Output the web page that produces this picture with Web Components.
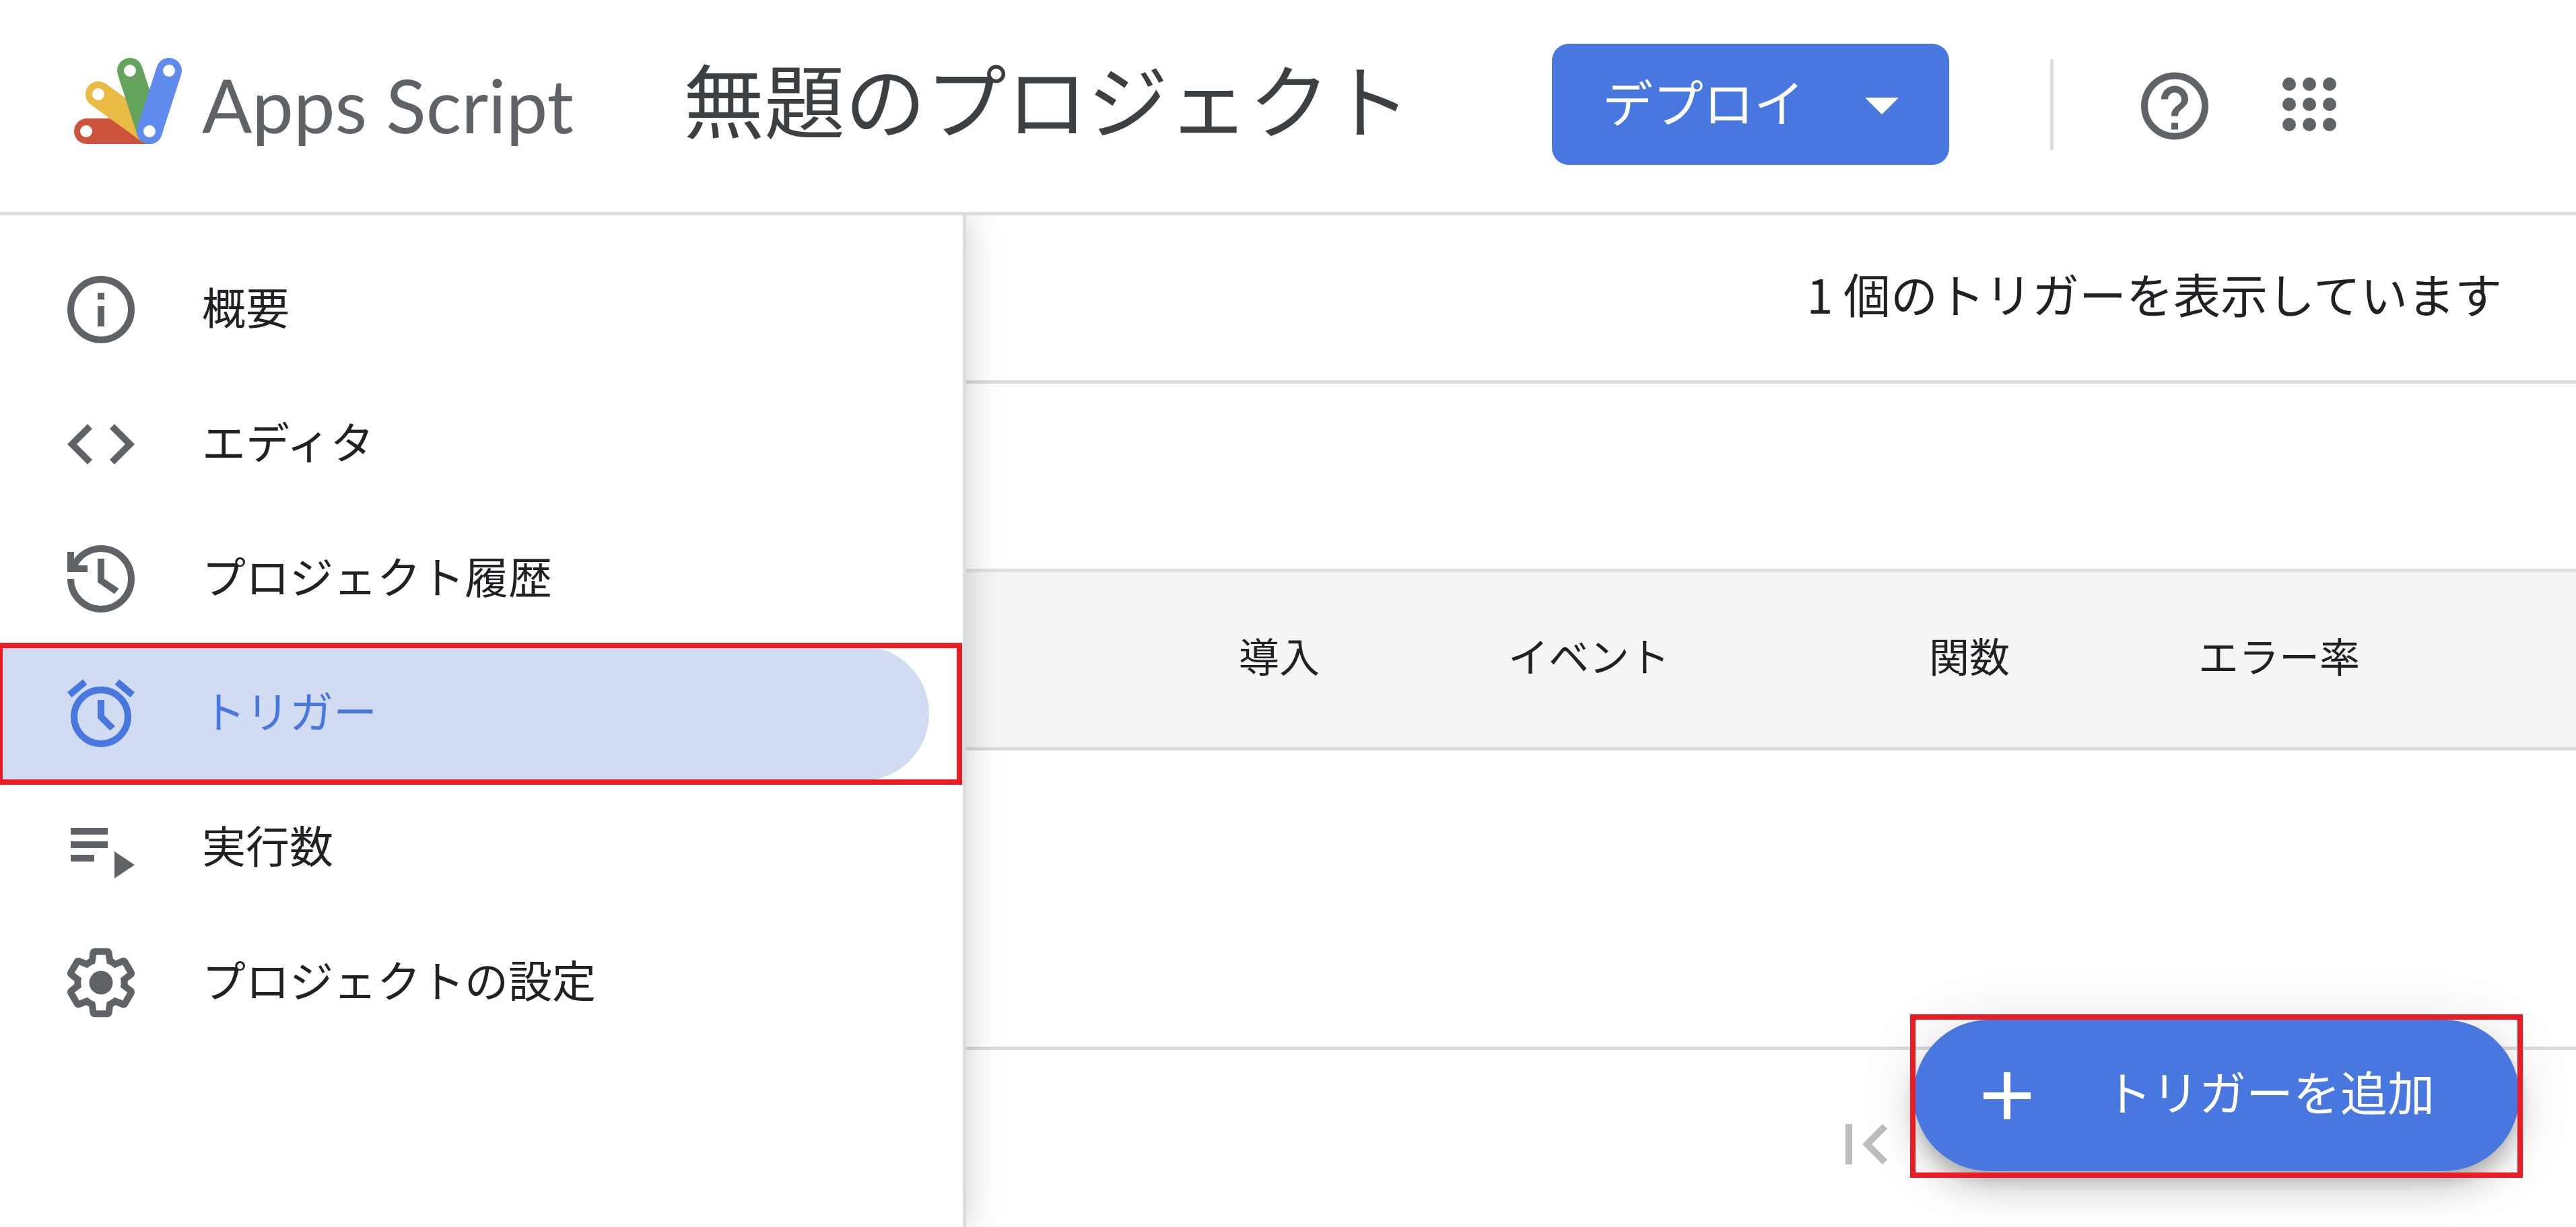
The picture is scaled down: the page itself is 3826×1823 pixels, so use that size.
<!DOCTYPE html>
<html lang="ja">
<head>
<meta charset="utf-8">
<title>無題のプロジェクト - Apps Script</title>
<style>
    body{
        margin: 0;
        background: white;
        color: #202124;
        font-family: "Noto Sans CJK JP", sans-serif;
    }
</style>
</head>
<body>
<script-app>
    <app-header slot="header" project="無題のプロジェクト"></app-header>
    <side-nav slot="nav">
        <nav-item icon="info" href="#overview">概要</nav-item>
        <nav-item icon="code" href="#editor">エディタ</nav-item>
        <nav-item icon="history" href="#history">プロジェクト履歴</nav-item>
        <mark-box class="nav-mark"><nav-item icon="alarm" href="#triggers" active>トリガー</nav-item></mark-box>
        <nav-item icon="executions" href="#executions">実行数</nav-item>
        <nav-item icon="settings" href="#settings">プロジェクトの設定</nav-item>
    </side-nav>
    <trigger-list>1 個のトリガーを表示しています</trigger-list>
    <mark-box slot="fab"><fab-button>トリガーを追加</fab-button></mark-box>
</script-app>

<script>
const ICONS = {
    info: `<path d="M11 7h2v2h-2zM11 11h2v6h-2z"/><circle cx="12" cy="12" r="9" fill="none" stroke="currentColor" stroke-width="2"/>`,
    code: `<path d="M9.4 16.6L4.8 12l4.6-4.6L8 6l-6 6 6 6zM14.6 16.6l4.6-4.6-4.6-4.6L16 6l6 6-6 6z"/>`,
    history: `<path d="M3 12a9 9 0 1 0 9-9C8.500 3 5.500 5 4 8M3 4v5h5" fill="none" stroke="currentColor" stroke-width="2"/><path d="M11 6v7l5 3.5 1.3-1.6L13 12V6z"/>`,
    alarm: `<path d="M22 5.72l-4.6-3.86-1.29 1.53 4.6 3.86zM7.88 3.39L6.6 1.86 2 5.71l1.29 1.53zM11 8v5.4l3.7 3.7 1.5-1.3-3.2-3.2V8z"/><circle cx="12" cy="13" r="8" fill="none" stroke="currentColor" stroke-width="2"/>`,
    executions: `<path d="M3 6h11v2H3zM3 10h11v2H3zM3 14h7v2H3zM16 13v8l6-4z"/>`,
    settings: `<path d="M13.85 22.25h-3.7c-.74 0-1.36-.54-1.45-1.27l-.27-1.89c-.27-.14-.53-.29-.79-.46l-1.8.72c-.7.26-1.47-.03-1.81-.65L2.2 15.53c-.35-.66-.2-1.44.36-1.88l1.53-1.19c-.01-.15-.02-.3-.02-.46 0-.15.01-.31.02-.46l-1.52-1.19c-.59-.45-.74-1.26-.37-1.88l1.85-3.19c.34-.62 1.11-.9 1.79-.63l1.81.73c.26-.17.52-.32.78-.46l.27-1.91c.09-.7.71-1.25 1.44-1.25h3.7c.74 0 1.36.54 1.45 1.27l.27 1.89c.27.14.53.29.79.46l1.8-.72c.71-.26 1.48.03 1.82.65l1.84 3.18c.36.66.2 1.44-.36 1.88l-1.52 1.19c.01.15.02.3.02.46s-.01.31-.02.46l1.52 1.19c.56.45.72 1.23.37 1.86l-1.86 3.22c-.34.62-1.11.9-1.8.63l-1.8-.72c-.26.17-.52.32-.78.46l-.27 1.91c-.1.68-.72 1.22-1.46 1.22zm-3.23-2h2.76l.37-2.55.53-.22c.44-.18.88-.44 1.34-.78l.45-.34 2.38.96 1.38-2.4-2.03-1.58.07-.56c.03-.26.06-.51.06-.78s-.03-.53-.06-.78l-.07-.56 2.03-1.58-1.39-2.4-2.39.96-.45-.35c-.42-.32-.87-.58-1.33-.77l-.52-.22-.37-2.55h-2.76l-.37 2.55-.53.21c-.44.19-.88.44-1.34.79l-.45.33-2.38-.95-1.39 2.39 2.03 1.58-.07.56a7 7 0 0 0-.06.79c0 .26.02.53.06.78l.07.56-2.03 1.58 1.38 2.4 2.39-.96.45.35c.43.33.86.58 1.33.77l.53.22z"/><circle cx="12" cy="12" r="3.5"/>`,
    help: `<path d="M11 17.5h2v2h-2zM12 6.5c-2.21 0-4 1.79-4 4h2c0-1.1.9-2 2-2s2 .9 2 2c0 2-3 1.75-3 5h2c0-2.25 3-2.5 3-5 0-2.21-1.79-4-4-4z"/><circle cx="12" cy="12.5" r="9" fill="none" stroke="currentColor" stroke-width="2"/>`,
    apps: [6, 12, 18].map(y => [6, 12, 18].map(x => `<circle cx="${x}" cy="${y}" r="2"/>`).join("")).join(""),
    down: `<path d="M7 10h10l-5 5z"/>`,
    add: `<path d="M19 13h-6v6h-2v-6H5v-2h6V5h2v6h6z"/>`,
    first: `<path d="M18.41 16.59L13.82 12l4.59-4.59L17 6l-6 6 6 6zM6 6h2v12H6z"/>`
};

class SvgIcon extends HTMLElement{
    constructor(){
        super();
        this.root = this.attachShadow({mode: "open"});
    }

    connectedCallback(){
        this.root.innerHTML = `
            <style>
                :host{
                    display: block;
                    flex: none;
                    width: 120px;
                    height: 120px;
                }
                svg{
                    display: block;
                    width: 100%;
                    height: 100%;
                    fill: currentColor;
                }
            </style>
            <svg viewBox="0 0 24 24" aria-hidden="true">${ICONS[this.getAttribute("name")]}</svg>
        `;
    }
}

class ScriptApp extends HTMLElement{
    constructor(){
        super();
        this.root = this.attachShadow({mode: "open"});
        this.root.innerHTML = `
            <style>
                :host{
                    display: flex;
                    flex-direction: column;
                    min-height: 100vh;
                }
                .body{
                    display: flex;
                    flex: 1;
                }
                .fab{
                    position: fixed;
                    right: 84px;
                    bottom: 83px;
                    z-index: 2;
                }
                main{
                    flex: 1;
                    min-width: 0;
                }
            </style>
            <slot name="header"></slot>
            <div class="body">
                <slot name="nav"></slot>
                <main><slot></slot></main>
            </div>
            <div class="fab"><slot name="fab"></slot></div>
        `;
    }
}

class AppHeader extends HTMLElement{
    constructor(){
        super();
        this.root = this.attachShadow({mode: "open"});
        this.root.innerHTML = `
            <style>
                :host{
                    display: block;
                    border-bottom: 5px solid #dadce0;
                }
                header{
                    display: flex;
                    align-items: center;
                    box-sizing: border-box;
                    height: 315px;
                    padding: 0 336px 5px 110px;
                    color: #5f6368;
                }
                .brand{
                    display: flex;
                    align-items: center;
                    gap: 30px;
                    width: 905px;
                    color: inherit;
                    text-decoration: none;
                    font: 110px/140px Lato, sans-serif;
                }
                .brand svg{
                    width: 160px;
                    height: 128px;
                    padding-bottom: 10px;
                    overflow: visible;
                }
                h1{
                    margin: 0;
                    padding-bottom: 20px;
                    font-size: 120px;
                    line-height: 160px;
                    font-weight: 400;
                    color: #3c4043;
                    white-space: nowrap;
                }
                button{
                    padding: 0;
                    border: 0;
                    background: none;
                    color: inherit;
                    font: inherit;
                }
                .deploy{
                    display: flex;
                    align-items: center;
                    justify-content: space-between;
                    box-sizing: border-box;
                    width: 590px;
                    height: 180px;
                    margin-left: auto;
                    padding: 0 40px 0 75px;
                    border-radius: 25px;
                    background: #4877df;
                    color: white;
                    font-size: 75px;
                    line-height: 100px;
                }
                .deploy span{
                    padding-bottom: 10px;
                }
                .line{
                    width: 5px;
                    height: 135px;
                    margin: 0 120px 0 150px;
                    background: #dadce0;
                }
                .apps{
                    margin-left: 80px;
                }
            </style>
            <header>
                <a class="brand" href="#home">
                    <svg viewBox="0 0 160 128" aria-hidden="true" fill="none" stroke-width="38" stroke-linecap="round">
                        <path d="M19 109H112" stroke="#cc533e"/>
                        <path d="M36 54L112 109" stroke="#eabb44"/>
                        <path d="M83 19L112 109" stroke="#63a35c"/>
                        <path d="M141 19L112 109" stroke="#5f8aee"/>
                        <g fill="white" stroke="none">
                            <circle cx="18" cy="109" r="9"/>
                            <circle cx="36" cy="54" r="9"/>
                            <circle cx="83" cy="19" r="9"/>
                            <circle cx="141" cy="19" r="9"/>
                            <circle cx="112" cy="109" r="9"/>
                        </g>
                    </svg>
                    <span>Apps Script</span>
                </a>
                <h1></h1>
                <button class="deploy" type="button"><span>デプロイ</span><svg-icon name="down"></svg-icon></button>
                <div class="line"></div>
                <button type="button" aria-label="ヘルプ"><svg-icon name="help"></svg-icon></button>
                <button class="apps" type="button" aria-label="Google アプリ"><svg-icon name="apps"></svg-icon></button>
            </header>
        `;
    }

    connectedCallback(){
        this.root.querySelector("h1").textContent = this.getAttribute("project");
    }
}

class SideNav extends HTMLElement{
    constructor(){
        super();
        this.root = this.attachShadow({mode: "open"});
        this.root.innerHTML = `
            <style>
                :host{
                    display: block;
                    flex: none;
                    width: 1430px;
                    border-right: 5px solid #dadce0;
                    box-shadow: 0 0 50px rgba(0, 0, 0, .2);
                    clip-path: inset(0 -60px 0 0);
                    background: white;
                    z-index: 1;
                }
                nav{
                    display: flex;
                    flex-direction: column;
                    padding: 40px 0;
                }
                ::slotted(.nav-mark){
                    --mark-inset: -5px 1px -6px -4px;
                }
            </style>
            <nav><slot></slot></nav>
        `;
    }
}

class NavItem extends HTMLElement{
    constructor(){
        super();
        this.root = this.attachShadow({mode: "open"});
    }

    connectedCallback(){
        this.root.innerHTML = `
            <style>
                :host{
                    display: block;
                }
                a{
                    display: flex;
                    align-items: center;
                    gap: 90px;
                    height: 200px;
                    margin-right: 50px;
                    padding-left: 90px;
                    border-radius: 0 100px 100px 0;
                    color: inherit;
                    text-decoration: none;
                    font-size: 65px;
                    line-height: 90px;
                }
                svg-icon{
                    color: #5f6368;
                }
                span{
                    padding-bottom: 12px;
                }
                :host([active]) a{
                    background: #d1dbf2;
                    color: #4877df;
                }
                :host([active]) svg-icon{
                    color: inherit;
                }
            </style>
            <a href="${this.getAttribute("href")}">
                <svg-icon name="${this.getAttribute("icon")}"></svg-icon>
                <span><slot></slot></span>
            </a>
        `;
    }
}

// red frame drawn over whatever is slotted
class MarkBox extends HTMLElement{
    constructor(){
        super();
        this.root = this.attachShadow({mode: "open"});
        this.root.innerHTML = `
            <style>
                :host{
                    display: block;
                    position: relative;
                }
                :host::after{
                    content: "";
                    position: absolute;
                    inset: var(--mark-inset, -8px -5px -10px -5px);
                    border: 8px solid #ed1c24;
                    pointer-events: none;
                }
            </style>
            <slot></slot>
        `;
    }
}

class TriggerList extends HTMLElement{
    constructor(){
        super();
        this.root = this.attachShadow({mode: "open"});
        this.root.innerHTML = `
            <style>
                :host{
                    display: block;
                }
                .count{
                    height: 245px;
                    padding-right: 110px;
                    border-bottom: 5px solid #dadce0;
                    font-size: 70px;
                    line-height: 232px;
                    text-align: right;
                }
                .filter{
                    height: 275px;
                    border-bottom: 5px solid #e0e0e0;
                }
                .rows{
                    min-height: 705px;
                    border-bottom: 5px solid #dadce0;
                }
                table{
                    width: 100%;
                    table-layout: fixed;
                    border-collapse: separate;
                    border-spacing: 0;
                }
                th{
                    height: 265px;
                    padding: 0 0 14px;
                    box-sizing: border-box;
                    font-size: 60px;
                    line-height: 90px;
                    font-weight: 400;
                    text-align: left;
                }
                thead tr > *{
                    border-bottom: 5px solid #dadce0;
                    background: #f5f5f5;
                }
                .first{
                    width: 405px;
                }
                .narrow{
                    width: 400px;
                }
                .wide{
                    width: 625px;
                }
                footer{
                    display: flex;
                    justify-content: flex-end;
                    padding: 80px 995px 0 0;
                }
                button{
                    padding: 0;
                    border: 0;
                    background: none;
                    color: #bdbdbd;
                }
            </style>
            <div class="count"><slot></slot></div>
            <div class="filter"></div>
            <div class="rows">
                <table>
                    <colgroup><col class="first"><col class="narrow"><col class="wide"><col class="narrow"><col></colgroup>
                    <thead>
                        <tr><td></td><th scope="col">導入</th><th scope="col">イベント</th><th scope="col">関数</th><th scope="col">エラー率</th></tr>
                    </thead>
                </table>
            </div>
            <footer><button type="button" disabled aria-label="最初のページ"><svg-icon name="first"></svg-icon></button></footer>
        `;
    }
}

class FabButton extends HTMLElement{
    constructor(){
        super();
        this.root = this.attachShadow({mode: "open"});
        this.root.innerHTML = `
            <style>
                :host{
                    display: block;
                }
                button{
                    display: flex;
                    align-items: center;
                    gap: 85px;
                    box-sizing: border-box;
                    width: 900px;
                    height: 225px;
                    padding: 0 0 0 79px;
                    border: 0;
                    border-radius: 113px;
                    background: #4877df;
                    color: white;
                    font: inherit;
                    font-size: 70px;
                    line-height: 90px;
                    box-shadow: 0 15px 25px -5px rgba(0, 0, 0, .2), 0 30px 50px rgba(0, 0, 0, .14), 0 5px 90px rgba(0, 0, 0, .12);
                }
                span{
                    padding-bottom: 14px;
                }
            </style>
            <button type="button"><svg-icon name="add"></svg-icon><span><slot></slot></span></button>
        `;
    }
}

window.customElements.define("svg-icon", SvgIcon);
window.customElements.define("script-app", ScriptApp);
window.customElements.define("app-header", AppHeader);
window.customElements.define("side-nav", SideNav);
window.customElements.define("nav-item", NavItem);
window.customElements.define("mark-box", MarkBox);
window.customElements.define("trigger-list", TriggerList);
window.customElements.define("fab-button", FabButton);
</script>
</body>
</html>
